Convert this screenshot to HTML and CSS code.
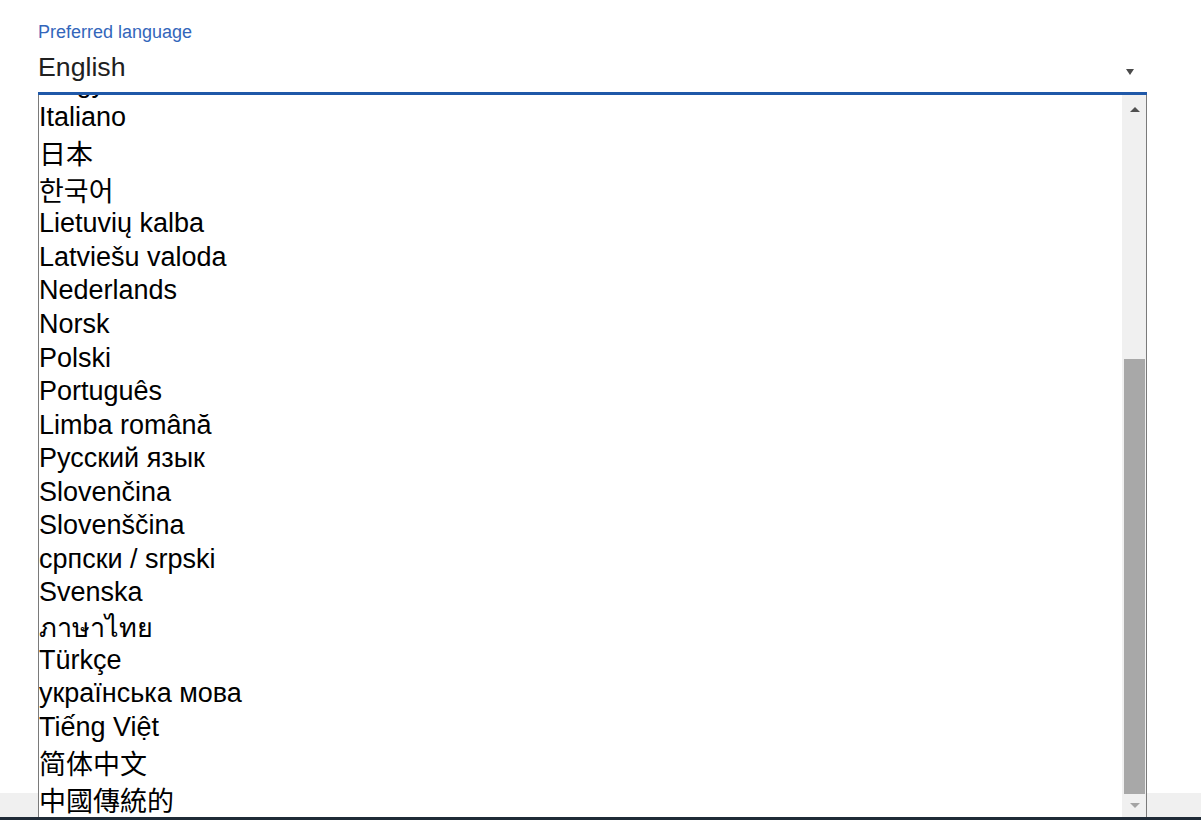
FILE: index.html
```
<!doctype html>
<html>

<head>
<meta charset="utf-8" />
<title>Preferred language</title>
<link rel="stylesheet" href="styles.css">
</head>

<body>

<div class="page">
	<div class="field">
		<label class="field-label">Preferred language</label>
		<div class="select">
			<span class="select-value">English</span>
			<span class="select-arrow"></span>
		</div>

		<div class="listbox">
			<div class="options">
				<ul class="option-list">
					<li>Magyar</li>
					<li>Italiano</li>
					<li class="cjk ja">日本</li>
					<li class="cjk ko">한국어</li>
					<li>Lietuvių kalba</li>
					<li>Latviešu valoda</li>
					<li>Nederlands</li>
					<li>Norsk</li>
					<li>Polski</li>
					<li>Português</li>
					<li>Limba română</li>
					<li>Русский язык</li>
					<li>Slovenčina</li>
					<li>Slovenščina</li>
					<li>српски / srpski</li>
					<li>Svenska</li>
					<li class="thai">ภาษาไทย</li>
					<li>Türkçe</li>
					<li>українська мова</li>
					<li>Tiếng Việt</li>
					<li class="cjk sc">简体中文</li>
					<li class="cjk tc">中國傳統的</li>
				</ul>
			</div>
			<div class="scrollbar">
				<div class="scroll-btn scroll-up"><span class="tri-up"></span></div>
				<div class="scroll-track"><div class="scroll-thumb"></div></div>
				<div class="scroll-btn scroll-down"><span class="tri-down"></span></div>
			</div>
		</div>
	</div>
</div>

<div class="statusbar"></div>
<div class="taskbar"></div>

</body>

</html>
```

FILE: styles.css
```
* {
	margin: 0;
	padding: 0;
	box-sizing: border-box;
}
html, body {
	width: 100%;
	height: 100%;
	overflow: hidden;
	background: #fff;
	font-family: "Liberation Sans", Arial, sans-serif;
	color: #000;
}

.page {
	height: 793px;
	position: relative;
}
.statusbar {
	height: 24px;
	background: #f0f0f0;
}
.taskbar {
	height: 3px;
	background: #1f2b37;
}

/* dropdown field */
.field {
	margin-left: 38px;
	width: 1109px;
	padding-top: 21.5px;
}
.field-label {
	display: block;
	font-size: 18px;
	line-height: 20px;
	color: #3366bb;
}
.select {
	display: flex;
	justify-content: space-between;
	padding: 10px 0 10.5px;
	border-bottom: 3px solid #1f58a8;
}
.select-value {
	font-size: 26.7px;
	line-height: 30px;
	color: #202020;
}
.select-arrow {
	align-self: flex-end;
	margin: 0 13px 7px 0;
	width: 0;
	height: 0;
	border-left: 4px solid transparent;
	border-right: 4px solid transparent;
	border-top: 6px solid #4a4a4a;
}

/* open list, drawn over the page */
.listbox {
	position: absolute;
	top: 95px;
	left: 38px;
	width: 1109px;
	height: 722px;
	display: flex;
	border-left: 1px solid #7a7a7a;
	border-right: 1px solid #7a7a7a;
	background: #fff;
	z-index: 2;
}
.options {
	flex: 1;
	overflow: hidden;
}
.option-list {
	list-style: none;
	margin-top: -27.8px;
}
.option-list li {
	height: 33.55px;
	line-height: 33.55px;
	font-size: 27px;
	white-space: nowrap;
}
.option-list li.cjk {
	height: 36.55px;
	padding-top: 6px;
	line-height: 30.55px;
}
.option-list li.thai {
	line-height: 37.4px;
}
.option-list li.ja { font-family: "Liberation Sans", "Noto Sans CJK JP", sans-serif; }
.option-list li.ko { font-family: "Liberation Sans", "Noto Sans CJK KR", sans-serif; }
.option-list li.sc { font-family: "Liberation Sans", "Noto Sans CJK SC", sans-serif; }
.option-list li.tc { font-family: "Liberation Sans", "Noto Sans CJK TC", sans-serif; }

/* scrollbar */
.scrollbar {
	width: 24px;
	display: flex;
	flex-direction: column;
	background: #f0f0f0;
}
.scroll-btn {
	display: flex;
	align-items: center;
	justify-content: center;
}
.scroll-up {
	height: 28px;
	padding-left: 1px;
}
.scroll-down {
	height: 23px;
	padding-left: 1px;
}
.scroll-track {
	flex: 1;
	padding-top: 236px;
}
.scroll-thumb {
	height: 435px;
	margin: 0 1px 0 2px;
	background: #a8a8a8;
}
.tri-up {
	width: 0;
	height: 0;
	border-left: 5.5px solid transparent;
	border-right: 5.5px solid transparent;
	border-bottom: 5.5px solid #505050;
}
.tri-down {
	width: 0;
	height: 0;
	border-left: 5.5px solid transparent;
	border-right: 5.5px solid transparent;
	border-top: 5.5px solid #a3a3a3;
}
```
